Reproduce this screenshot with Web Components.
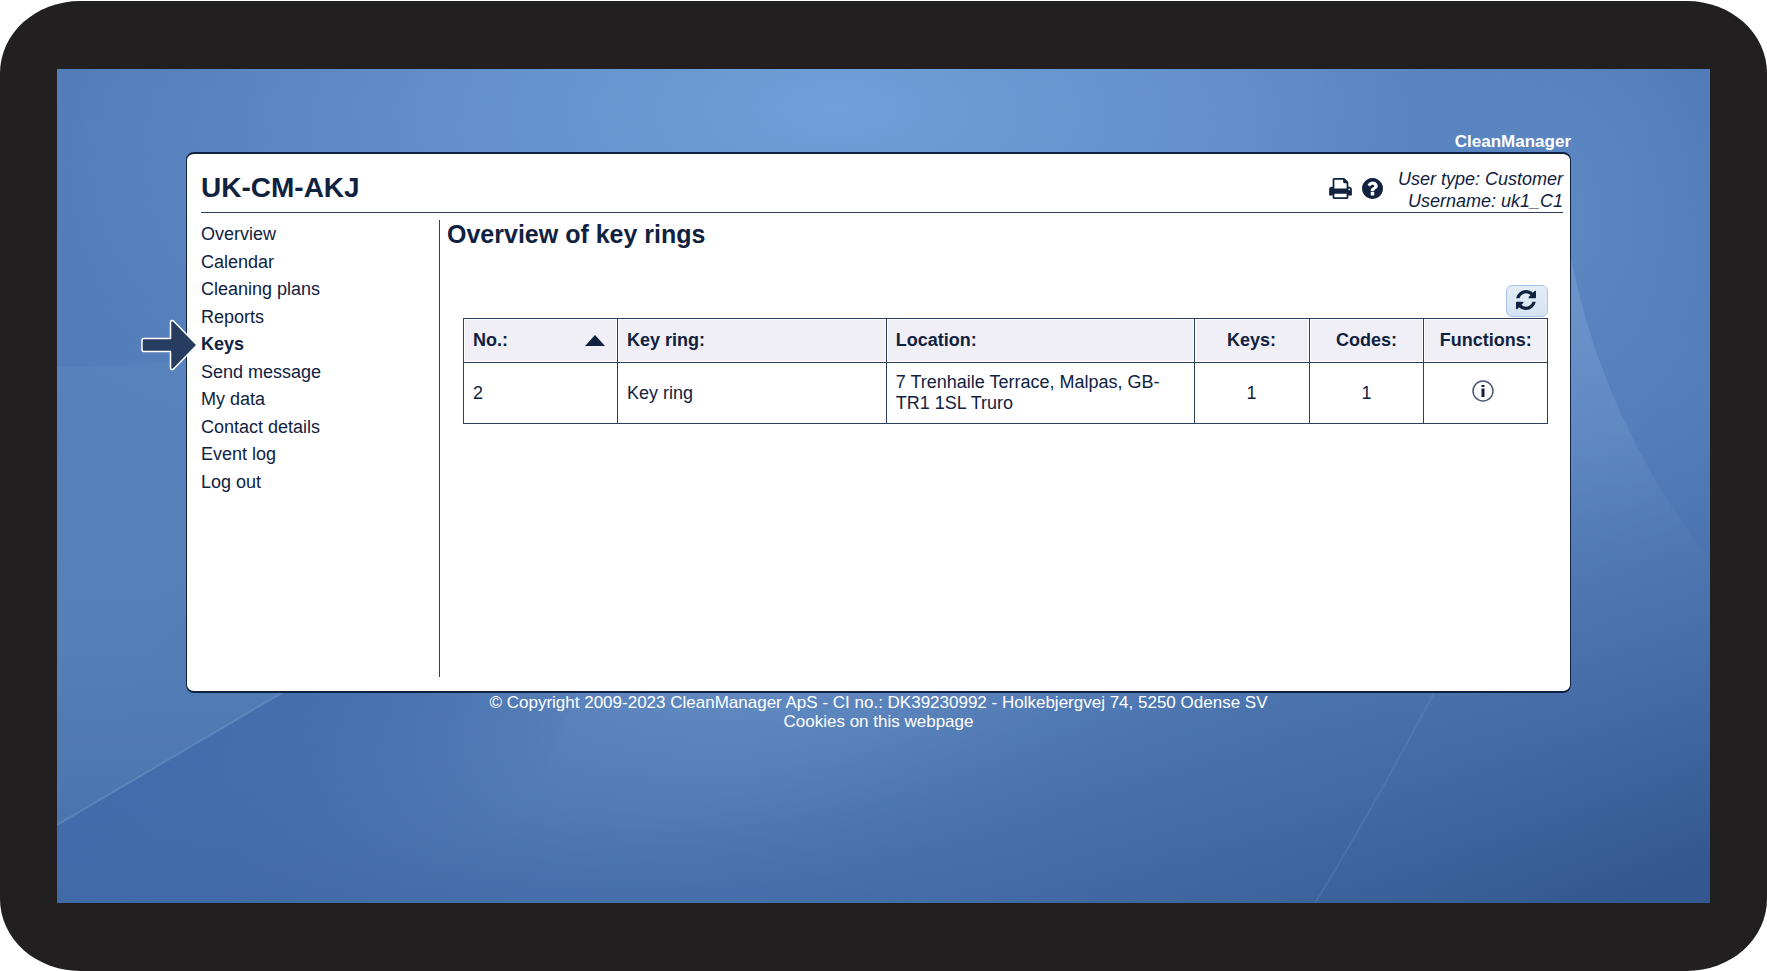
<!DOCTYPE html>
<html lang="en">
<head>
<meta charset="utf-8">
<meta name="viewport" content="width=device-width, initial-scale=1">
<title>CleanManager - Keys</title>
<style>
    body {
        margin: 0;
        background: #fff;
        color: #10223f;
        font-family: "Liberation Sans", Arial, sans-serif;
        font-size: 18px;
    }
</style>
</head>
<body>
<device-frame>
    <portal-wallpaper>
        <portal-page brand="CleanManager">
            <portal-panel>
                <portal-header slot="header" company="UK-CM-AKJ" user-type="Customer" username="uk1_C1"></portal-header>
                <portal-menu slot="menu">
                    <menu-entry href="#overview">Overview</menu-entry>
                    <menu-entry href="#calendar">Calendar</menu-entry>
                    <menu-entry href="#cleaning-plans">Cleaning plans</menu-entry>
                    <menu-entry href="#reports">Reports</menu-entry>
                    <menu-entry href="#keys" current>Keys</menu-entry>
                    <menu-entry href="#send-message">Send message</menu-entry>
                    <menu-entry href="#my-data">My data</menu-entry>
                    <menu-entry href="#contact-details">Contact details</menu-entry>
                    <menu-entry href="#event-log">Event log</menu-entry>
                    <menu-entry href="#log-out">Log out</menu-entry>
                </portal-menu>
                <key-rings></key-rings>
            </portal-panel>
            <portal-footer slot="footer">© Copyright 2009-2023 CleanManager ApS - CI no.: DK39230992 - Holkebjergvej 74, 5250 Odense SV</portal-footer>
        </portal-page>
    </portal-wallpaper>
</device-frame>

<script>
class DeviceFrame extends HTMLElement {
    connectedCallback() {
        this.attachShadow({ mode: 'open' });
        this.shadowRoot.innerHTML = `
            <style>
                :host {
                    display: flex;
                    box-sizing: border-box;
                    min-height: 100vh;
                    padding-top: 1px;
                }
                .bezel {
                    display: flex;
                    flex: 1;
                    min-width: 0;
                    padding: 68px 57px;
                    border-radius: 80px / 72px;
                    background-color: #221f20;
                }
                ::slotted(*) {
                    flex: 1;
                    min-width: 0;
                }
            </style>
            <div class="bezel"><slot></slot></div>
        `;
    }
}
customElements.define('device-frame', DeviceFrame);

class PortalWallpaper extends HTMLElement {
    connectedCallback() {
        this.attachShadow({ mode: 'open' });
        this.shadowRoot.innerHTML = `
            <style>
                :host {
                    display: block;
                    position: relative;
                    overflow: hidden;
                    background-color: #5580bb;
                }
                .art {
                    position: absolute;
                    inset: 0;
                    width: 100%;
                    height: 100%;
                }
                .page {
                    position: relative;
                }
            </style>
            <svg class="art" viewBox="0 0 1653 834" preserveAspectRatio="none" aria-hidden="true">
                <defs>
                    <linearGradient id="base" x1="0" y1="0" x2="0" y2="1">
                        <stop offset="0" stop-color="#4c75b3"/>
                        <stop offset=".35" stop-color="#527db9"/>
                        <stop offset=".7" stop-color="#4f7ab4"/>
                        <stop offset="1" stop-color="#4069a5"/>
                    </linearGradient>
                    <radialGradient id="top" gradientUnits="userSpaceOnUse" cx="0" cy="0" r="1" gradientTransform="translate(780 40) scale(1000 460)">
                        <stop offset="0" stop-color="#70a0d9"/>
                        <stop offset=".4" stop-color="#6896cf" stop-opacity=".8"/>
                        <stop offset=".75" stop-color="#5c88c2" stop-opacity=".5"/>
                        <stop offset="1" stop-color="#5580bb" stop-opacity="0"/>
                    </radialGradient>
                    <radialGradient id="right" gradientUnits="userSpaceOnUse" cx="0" cy="0" r="1" gradientTransform="translate(1500 150) scale(260 360)">
                        <stop offset="0" stop-color="#5c89c4"/>
                        <stop offset="1" stop-color="#5580bb" stop-opacity="0"/>
                    </radialGradient>
                    <radialGradient id="low" gradientUnits="userSpaceOnUse" cx="0" cy="0" r="1" gradientTransform="translate(720 570) rotate(-10) scale(680 320)">
                        <stop offset="0" stop-color="#6890c6"/>
                        <stop offset=".5" stop-color="#5881ba" stop-opacity=".7"/>
                        <stop offset="1" stop-color="#4b75b0" stop-opacity="0"/>
                    </radialGradient>
                    <linearGradient id="corner" gradientUnits="userSpaceOnUse" x1="1280" y1="480" x2="1440" y2="880">
                        <stop offset="0" stop-color="#4a74b0" stop-opacity="0"/>
                        <stop offset=".4" stop-color="#456ca6" stop-opacity=".6"/>
                        <stop offset="1" stop-color="#33588f"/>
                    </linearGradient>
                    <linearGradient id="band" gradientUnits="userSpaceOnUse" x1="1514" y1="250" x2="1560" y2="620">
                        <stop offset="0" stop-color="#7ba0d3" stop-opacity=".5"/>
                        <stop offset="1" stop-color="#6a90c6" stop-opacity="0"/>
                    </linearGradient>
                    <linearGradient id="fold" gradientUnits="userSpaceOnUse" x1="180" y1="640" x2="330" y2="834">
                        <stop offset="0" stop-color="#406aaa" stop-opacity=".75"/>
                        <stop offset="1" stop-color="#406aaa" stop-opacity="0"/>
                    </linearGradient>
                </defs>
                <rect width="1653" height="834" fill="url(#base)"/>
                <rect width="1653" height="834" fill="url(#top)"/>
                <rect width="1653" height="834" fill="url(#right)"/>
                <path d="M0 298Q60 297 130 292V624H225L0 756Z" fill="#7fa5cf" fill-opacity=".12"/>
                <rect width="1653" height="834" fill="url(#low)"/>
                <path d="M0 757L225 624H520L430 834H0Z" fill="url(#fold)"/>
                <path d="M0 756L225 624" fill="none" stroke="#86acd6" stroke-opacity=".3" stroke-width="2"/>
                <path d="M1514 189Q1545 350 1653 493V640H1514Z" fill="url(#band)"/>
                <rect width="1653" height="834" fill="url(#corner)"/>
                <path d="M1377 624Q1310 750 1258 834" fill="none" stroke="#7a9fce" stroke-opacity=".2" stroke-width="2"/>
            </svg>
            <div class="page"><slot></slot></div>
        `;
    }
}
customElements.define('portal-wallpaper', PortalWallpaper);

class PortalPage extends HTMLElement {
    connectedCallback() {
        this.attachShadow({ mode: 'open' });
        this.shadowRoot.innerHTML = `
            <style>
                :host {
                    display: block;
                    padding: 63px 139px 20px 129px;
                }
                .brand {
                    color: #fff;
                    font-size: 17px;
                    font-weight: 700;
                    line-height: 20px;
                    text-align: right;
                }
            </style>
            <div class="brand">${this.getAttribute('brand')}</div>
            <slot></slot>
            <slot name="footer"></slot>
        `;
    }
}
customElements.define('portal-page', PortalPage);

class PortalPanel extends HTMLElement {
    connectedCallback() {
        this.attachShadow({ mode: 'open' });
        this.shadowRoot.innerHTML = `
            <style>
                :host {
                    display: block;
                    padding: 14px 7px 14px 14px;
                    border: solid #10223f;
                    border-width: 2px 1px;
                    border-radius: 8px;
                    background-color: #fff;
                }
                .columns {
                    display: grid;
                    grid-template-columns: 239px minmax(0, 1fr);
                    min-height: 457px;
                    margin-top: 7px;
                }
                .menu {
                    border-right: 1px solid #2b3f5f;
                }
                main {
                    padding-left: 7px;
                }
            </style>
            <slot name="header"></slot>
            <div class="columns">
                <div class="menu"><slot name="menu"></slot></div>
                <main><slot></slot></main>
            </div>
        `;
    }
}
customElements.define('portal-panel', PortalPanel);

class PortalHeader extends HTMLElement {
    connectedCallback() {
        this.attachShadow({ mode: 'open' });
        this.shadowRoot.innerHTML = `
            <style>
                :host {
                    display: flex;
                    align-items: flex-start;
                    border-bottom: 1px solid #2b3f5f;
                }
                h1 {
                    flex: 1;
                    margin: 0;
                    font-size: 28px;
                    line-height: 40px;
                }
                button {
                    display: flex;
                    align-items: center;
                    height: 40px;
                    margin: 0;
                    padding: 0;
                    border: 0;
                    background: none;
                    color: inherit;
                    cursor: pointer;
                }
                svg {
                    display: block;
                    height: 21px;
                    fill: currentColor;
                }
                .tools {
                    display: flex;
                    gap: 10px;
                    margin-right: 15px;
                }
                .user {
                    font-style: italic;
                    line-height: 22px;
                    text-align: right;
                }
            </style>
            <h1>${this.getAttribute('company')}</h1>
            <div class="tools">
                <button type="button" aria-label="Print">
                    <svg viewBox="64 128 1664 1536" width="23"><path d="M448 1536h896v-256h-896v256zm0-640h896v-384h-160q-40 0-68-28t-28-68v-160h-640v640zm1152 64q0-26-19-45t-45-19-45 19-19 45 19 45 45 19 45-19 19-45zm128 0v416q0 13-9.5 22.5t-22.5 9.5h-224v160q0 40-28 68t-68 28h-960q-40 0-68-28t-28-68v-160h-224q-13 0-22.5-9.5t-9.5-22.5v-416q0-79 56.5-135.5t135.5-56.5h64v-544q0-40 28-68t68-28h672q40 0 88 20t76 48l152 152q28 28 48 76t20 88v256h64q79 0 135.5 56.5t56.5 135.5z"/></svg>
                </button>
                <button type="button" aria-label="Help">
                    <svg viewBox="128 128 1536 1536" width="21"><path d="M1024 1376v-192q0-14-9-23t-23-9h-192q-14 0-23 9t-9 23v192q0 14 9 23t23 9h192q14 0 23-9t9-23zm256-672q0-88-55.5-163t-138.5-116-170-41q-243 0-371 213-15 24 8 42l132 100q7 6 19 6 16 0 25-12 53-68 86-92 34-24 86-24 48 0 85.5 26t37.5 59q0 38-20 61t-68 45q-63 28-115.5 86.5t-52.5 125.5v36q0 14 9 23t23 9h192q14 0 23-9t9-23q0-19 21.5-49.5t54.5-49.5q32-18 49-28.5t46-35 44.5-48 28-60.5 12.5-81zm384 192q0 209-103 385.5t-279.5 279.5-385.5 103-385.5-103-279.5-279.5-103-385.5 103-385.5 279.5-279.5 385.5-103 385.5 103 279.5 279.5 103 385.5z"/></svg>
                </button>
            </div>
            <div class="user">
                <div>User type: ${this.getAttribute('user-type')}</div>
                <div>Username: ${this.getAttribute('username')}</div>
            </div>
        `;
    }
}
customElements.define('portal-header', PortalHeader);

class PortalMenu extends HTMLElement {
    connectedCallback() {
        this.attachShadow({ mode: 'open' });
        this.shadowRoot.innerHTML = `
            <style>
                :host {
                    display: block;
                }
                nav {
                    display: grid;
                    grid-auto-rows: 1fr;
                    min-height: 275px;
                    padding-top: 1px;
                }
            </style>
            <nav><slot></slot></nav>
        `;
    }
}
customElements.define('portal-menu', PortalMenu);

class MenuEntry extends HTMLElement {
    connectedCallback() {
        const current = this.hasAttribute('current');
        this.attachShadow({ mode: 'open' });
        this.shadowRoot.innerHTML = `
            <style>
                :host {
                    display: flex;
                    align-items: center;
                    position: relative;
                }
                :host([current]) {
                    font-weight: 700;
                }
                a {
                    color: inherit;
                    line-height: 21px;
                    text-decoration: none;
                }
                a:hover {
                    text-decoration: underline;
                }
                /* pointer sits over the panel edge */
                .pointer {
                    position: absolute;
                    top: 50%;
                    right: 100%;
                    margin-right: 3px;
                    transform: translateY(-50%);
                }
            </style>
            ${current ? `<svg class="pointer" width="58" height="52" viewBox="0 0 58 52" aria-hidden="true">
                <path d="M4 19.5H30.500V3Q31 .5 33.500 2L57 26 33.500 50Q31 51.500 30.500 49V32.500H4Q2 32.500 2 30.500V21.500Q2 19.500 4 19.500Z" fill="#263d60" stroke="#fff" stroke-width="1.500" stroke-linejoin="round"/>
            </svg>` : ''}
            <a href="${this.getAttribute('href')}"${current ? ' aria-current="page"' : ''}><slot></slot></a>
        `;
    }
}
customElements.define('menu-entry', MenuEntry);

class KeyRings extends HTMLElement {
    connectedCallback() {
        this.attachShadow({ mode: 'open' });
        this.shadowRoot.innerHTML = `
            <style>
                :host {
                    display: block;
                }
                h2 {
                    margin: 0;
                    font-size: 25px;
                    line-height: 28px;
                }
                .list {
                    padding: 37px 15px 0 16px;
                }
                .tools {
                    display: flex;
                    justify-content: flex-end;
                    margin-bottom: 1px;
                }
                .refresh {
                    display: flex;
                    align-items: flex-start;
                    justify-content: center;
                    width: 42px;
                    height: 32px;
                    padding: 4px 2px 0 0;
                    border: 1px solid #a9c4ea;
                    border-radius: 6px;
                    background: linear-gradient(#e3edf7, #d5e3f2);
                    color: #10223f;
                    cursor: pointer;
                }
                svg {
                    display: block;
                    fill: currentColor;
                }
                table {
                    width: 100%;
                    border-collapse: collapse;
                    table-layout: fixed;
                }
                th,
                td {
                    box-sizing: border-box;
                    padding: 0 8px 0 9px;
                    border: 1px solid #2b3f5f;
                    line-height: 21px;
                    text-align: left;
                }
                th {
                    height: 44px;
                    background-color: #f0eff6;
                    box-shadow: inset 0 0 0 1px #fff;
                }
                td {
                    height: 61px;
                }
                .num {
                    padding: 0 8px;
                    text-align: center;
                }
                .sort {
                    display: flex;
                    align-items: center;
                    justify-content: space-between;
                    width: 100%;
                    padding: 0 4px 0 0;
                    border: 0;
                    background: none;
                    color: inherit;
                    font: inherit;
                    line-height: 21px;
                    cursor: pointer;
                }
                .info {
                    display: inline-flex;
                    vertical-align: middle;
                    margin: 0 6px 4px 0;
                    color: inherit;
                }
            </style>
            <h2>Overview of key rings</h2>
            <div class="list">
                <div class="tools">
                    <button class="refresh" type="button" aria-label="Refresh">
                        <svg viewBox="128 128 1536 1536" width="20" height="20"><path d="M1639 1056q0 5-1 7-64 268-268 434.5t-478 166.5q-146 0-282.5-55t-243.5-157l-129 129q-19 19-45 19t-45-19-19-45v-448q0-26 19-45t45-19h448q26 0 45 19t19 45-19 45l-137 137q71 66 161 102t187 36q134 0 250-65t186-179q11-17 53-117 8-23 30-23h192q13 0 22.5 9.500t9.500 22.500zm25-800v448q0 26-19 45t-45 19h-448q-26 0-45-19t-19-45 19-45l138-138q-148-137-349-137-134 0-250 65t-186 179q-11 17-53 117-8 23-30 23h-199q-13 0-22.500-9.500t-9.500-22.500v-7q65-268 270-434.500t480-166.500q146 0 284 55.500t245 156.500l130-129q19-19 45-19t45 19 19 45z"/></svg>
                    </button>
                </div>
                <table>
                    <colgroup>
                        <col style="width: 14.2%">
                        <col style="width: 24.8%">
                        <col style="width: 28.4%">
                        <col style="width: 10.6%">
                        <col style="width: 10.6%">
                        <col style="width: 11.4%">
                    </colgroup>
                    <thead>
                        <tr>
                            <th aria-sort="ascending">
                                <button class="sort" type="button">No.:
                                    <svg viewBox="0 0 20 11" width="20" height="11" aria-hidden="true"><path d="M10 0L20 11H0Z"/></svg>
                                </button>
                            </th>
                            <th>Key ring:</th>
                            <th>Location:</th>
                            <th class="num">Keys:</th>
                            <th class="num">Codes:</th>
                            <th class="num">Functions:</th>
                        </tr>
                    </thead>
                    <tbody>
                        <tr>
                            <td>2</td>
                            <td>Key ring</td>
                            <td>7 Trenhaile Terrace, Malpas, GB-TR1 1SL Truro</td>
                            <td class="num">1</td>
                            <td class="num">1</td>
                            <td class="num">
                                <a class="info" href="#key-ring-2" aria-label="Information">
                                    <svg viewBox="0 0 22 22" width="22" height="22">
                                        <circle cx="11" cy="11" r="10" fill="none" stroke="#4a5a75" stroke-width="1.500"/>
                                        <path d="M9.500 5h3v2h-3zM9.500 8.500h3v8.500h-3z"/>
                                    </svg>
                                </a>
                            </td>
                        </tr>
                    </tbody>
                </table>
            </div>
        `;
    }
}
customElements.define('key-rings', KeyRings);

class PortalFooter extends HTMLElement {
    connectedCallback() {
        this.attachShadow({ mode: 'open' });
        this.shadowRoot.innerHTML = `
            <style>
                :host {
                    display: block;
                    color: #fff;
                    font-size: 17px;
                    line-height: 19px;
                    text-align: center;
                }
                a {
                    color: inherit;
                    text-decoration: none;
                }
            </style>
            <div><slot></slot></div>
            <div><a href="#cookies">Cookies on this webpage</a></div>
        `;
    }
}
customElements.define('portal-footer', PortalFooter);
</script>
</body>
</html>
